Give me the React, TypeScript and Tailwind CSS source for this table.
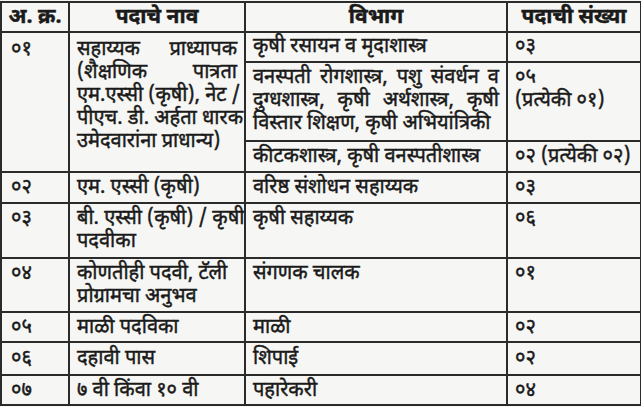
import React from "react";

const J = ({ children }: { children: React.ReactNode }) => (
  <div className="h-[23px] whitespace-nowrap text-justify [text-align-last:justify]">{children}</div>
);
const L = ({ children }: { children: React.ReactNode }) => (
  <div className="h-[23px] whitespace-nowrap">{children}</div>
);
const H = ({ children }: { children: React.ReactNode }) => (
  <div className="h-[26px] leading-[28px] whitespace-nowrap">{children}</div>
);

const td = "border-2 border-[#2b2b2b] align-top px-[7px] pb-0 overflow-hidden";
const th = "border-2 border-[#2b2b2b] text-center font-bold align-middle p-0 overflow-hidden text-[21px]";

export default function App() {
  return (
    <div
      className="w-[641px] h-[407px] bg-[#f6f6f4] text-[#1a1a1a] overflow-hidden [-webkit-text-stroke:0.45px_#1a1a1a]"
      style={{ fontFamily: '"Noto Sans Devanagari", "Lohit Devanagari", "Noto Sans", sans-serif' }}
    >
      <table className="table-fixed border-collapse w-[640px] mt-[1px] text-[20px] leading-[23px]">
        <colgroup>
          <col className="w-[68px]" />
          <col className="w-[176px]" />
          <col className="w-[262px]" />
          <col className="w-[134px]" />
        </colgroup>
        <tbody>
          <tr className="h-[30px]">
            <td className={th}><H>अ. क्र.</H></td>
            <td className={th}><H>पदाचे नाव</H></td>
            <td className={th}><H>विभाग</H></td>
            <td className={th}><H>पदाची संख्या</H></td>
          </tr>
          <tr className="h-[30px]">
            <td rowSpan={3} className={td + " pt-[6px] pl-[9px]"}><L>०१</L></td>
            <td rowSpan={3} className={td + " pt-[6px]"}>
              <J>सहाय्यक प्राध्यापक</J>
              <J>(शैक्षणिक पात्रता</J>
              <J>एम.एस्सी (कृषी), नेट /</J>
              <J>पीएच. डी. अर्हता धारक</J>
              <L>उमेदवारांना प्राधान्य)</L>
            </td>
            <td className={td + " pt-[3px]"}><L>कृषी रसायन व मृदाशास्त्र</L></td>
            <td className={td + " pt-[3px]"}><L>०३</L></td>
          </tr>
          <tr className="h-[79px]">
            <td className={td + " pt-[4px]"}>
              <J>वनस्पती रोगशास्त्र, पशु संवर्धन व</J>
              <J>दुग्धशास्त्र, कृषी अर्थशास्त्र, कृषी</J>
              <L>विस्तार शिक्षण, कृषी अभियांत्रिकी</L>
            </td>
            <td className={td + " pt-[4px]"}>
              <L>०५</L>
              <L>(प्रत्येकी ०१)</L>
            </td>
          </tr>
          <tr className="h-[31px]">
            <td className={td + " pt-[4px]"}><L>कीटकशास्त्र, कृषी वनस्पतीशास्त्र</L></td>
            <td className={td + " pt-[4px]"}><L>०२ (प्रत्येकी ०२)</L></td>
          </tr>
          <tr className="h-[31px]">
            <td className={td + " pt-[4px] pl-[9px]"}><L>०२</L></td>
            <td className={td + " pt-[4px]"}><L>एम. एस्सी (कृषी)</L></td>
            <td className={td + " pt-[4px]"}><L>वरिष्ठ संशोधन सहाय्यक</L></td>
            <td className={td + " pt-[4px]"}><L>०३</L></td>
          </tr>
          <tr className="h-[55px]">
            <td className={td + " pt-[4px] pl-[9px]"}><L>०३</L></td>
            <td className={td + " pt-[4px]"}>
              <J>बी. एस्सी (कृषी) / कृषी</J>
              <L>पदवीका</L>
            </td>
            <td className={td + " pt-[4px]"}><L>कृषी सहाय्यक</L></td>
            <td className={td + " pt-[4px]"}><L>०६</L></td>
          </tr>
          <tr className="h-[54px]">
            <td className={td + " pt-[4px] pl-[9px]"}><L>०४</L></td>
            <td className={td + " pt-[4px]"}>
              <L>कोणतीही पदवी, टॅली</L>
              <L>प्रोग्रामचा अनुभव</L>
            </td>
            <td className={td + " pt-[4px]"}><L>संगणक चालक</L></td>
            <td className={td + " pt-[4px]"}><L>०१</L></td>
          </tr>
          <tr className="h-[30px]">
            <td className={td + " pt-[4px] pl-[9px]"}><L>०५</L></td>
            <td className={td + " pt-[4px]"}><L>माळी पदविका</L></td>
            <td className={td + " pt-[4px]"}><L>माळी</L></td>
            <td className={td + " pt-[4px]"}><L>०२</L></td>
          </tr>
          <tr className="h-[33px]">
            <td className={td + " pt-[5px] pl-[9px]"}><L>०६</L></td>
            <td className={td + " pt-[5px]"}><L>दहावी पास</L></td>
            <td className={td + " pt-[5px]"}><L>शिपाई</L></td>
            <td className={td + " pt-[5px]"}><L>०२</L></td>
          </tr>
          <tr className="h-[30px]">
            <td className={td + " pt-[4px] pl-[9px]"}><L>०७</L></td>
            <td className={td + " pt-[4px]"}><L>७ वी किंवा १० वी</L></td>
            <td className={td + " pt-[4px]"}><L>पहारेकरी</L></td>
            <td className={td + " pt-[4px]"}><L>०४</L></td>
          </tr>
        </tbody>
      </table>
    </div>
  );
}
